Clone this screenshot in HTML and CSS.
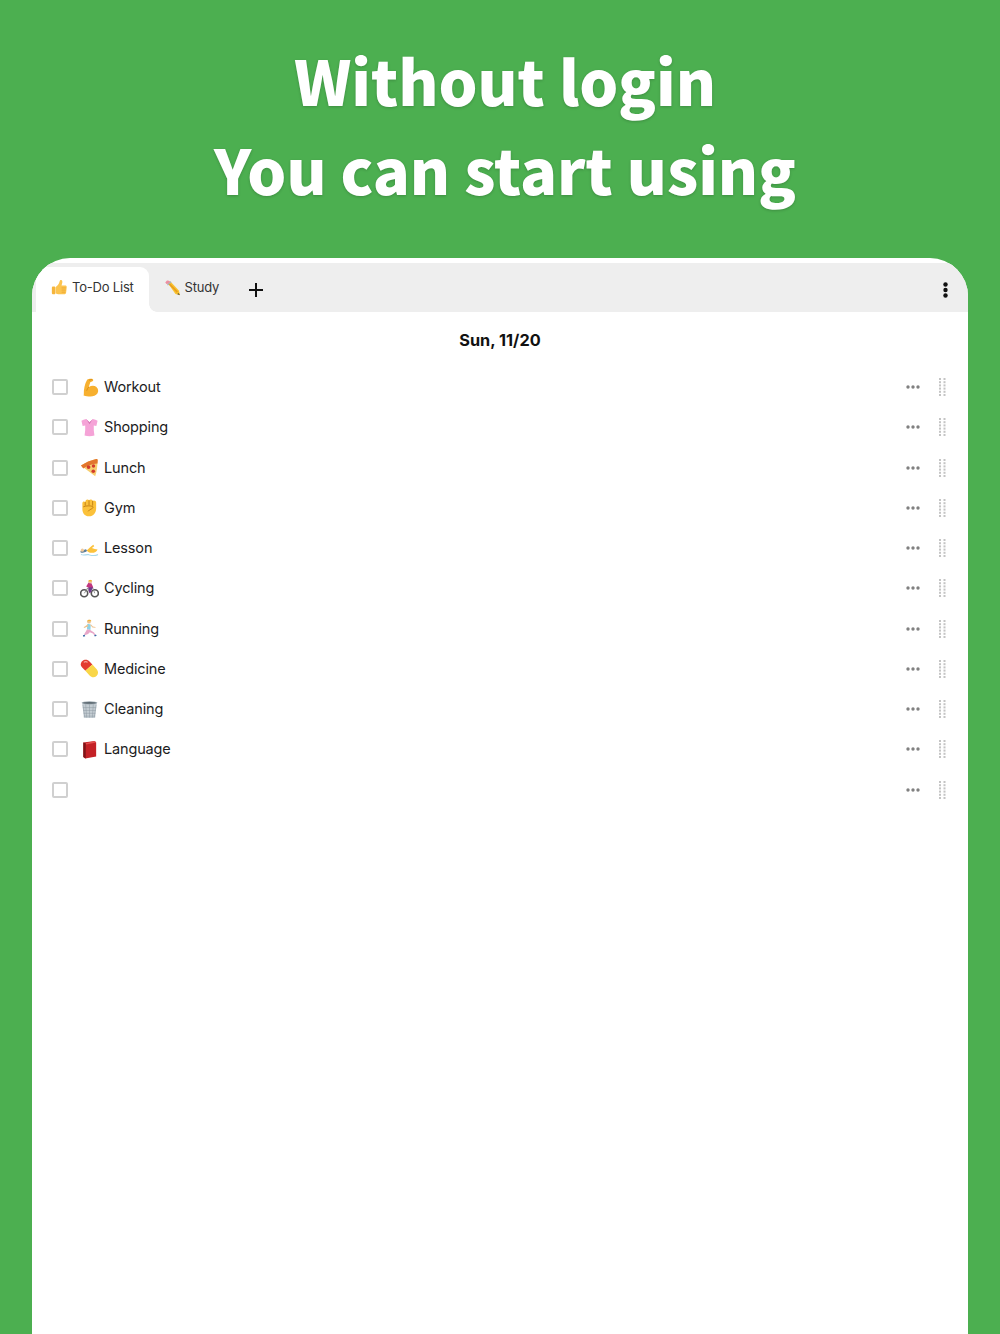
FILE: index.html
```html
<!DOCTYPE html>
<html lang="en">
<head>
    <title>To-Do List</title>
    <link rel="stylesheet" href="styles.css">
</head>
<body>
    <svg class="defs" aria-hidden="true">
        <symbol id="thumb" viewBox="0 0 20 20">
            <path d="M1 10.500c0-1 .7-1.600 1.600-1.600h1.200c.9 0 1.400.7 1.400 1.600v6c0 .9-.6 1.500-1.400 1.500H2.600c-.9 0-1.600-.6-1.600-1.500z" fill="#f5b53c"/>
            <path d="M5.500 9.500c2-1.500 4-3.500 4.600-6.500.2-1.300.8-2 1.800-1.800 1.300.2 1.800 1.700 1.300 3.600l-.8 2.700h4.300c1.200 0 1.900.8 1.800 1.800l-.7 6.500c-.2 1.400-1.100 2.200-2.500 2.200H9.500c-1.700 0-2.700-.5-4-1.200z" fill="#fcc44f"/>
            <path d="M12.500 10.500h5M12.500 13h4.800M12.500 15.500h4.300" stroke="#e59a22" stroke-width=".7" fill="none"/>
        </symbol>
        <symbol id="pencil" viewBox="0 0 20 20">
            <path d="M5 5.500 7.500 3l10 10.500L19 19l-5.500-1.500z" fill="#f8c22f"/>
            <path d="M6.300 4.300l10.200 10.500-1.500 1.500L5 6z" fill="#e99f1d"/>
            <path d="M1.500 4 3.200 2.200c.7-.7 1.600-.7 2.200 0L7.500 3 5 5.500 3 5.800z" fill="#ee8fa0"/>
            <path d="M3.600 6.600 7.800 2.700 8.800 3.700 4.600 7.700z" fill="#a9b0b8"/>
            <path d="M16.700 16.500 19 19l-3.200-1z" fill="#444"/>
        </symbol>
        <symbol id="arm" viewBox="0 0 20 20">
            <path d="M4 17.500C3.800 12 5 6 7.500 1.800 9 .6 12 .4 13.300 1c.9.500.8 2-.1 2.500L10.800 4.600 9.300 9.500c2.400-1.700 5.600-1.800 7.700-.4 2.300 1.600 2.800 4.900 1.300 7.200-1.500 2.200-4.300 3.200-7.300 3.200-2.600 0-5.300-.5-7-1.200-.4-.2-.6-.4 0-.8z" fill="#f7b02f"/>
            <path d="M9.300 9.500c-1.200 1-1.900 2.400-2.200 3.900M12.500 1.500l-3 .8" stroke="#cf8614" stroke-width=".8" fill="none"/>
        </symbol>
        <symbol id="shirt" viewBox="0 0 20 20">
            <path d="M6.500 1 10 4.500 13.500 1c2 .3 3.700 1 5 1.800l-1.300 5.500-2.700-.5c-.2 3.500.1 7 .7 10.700-3.300.8-7.100.8-10.400 0 .6-3.700.9-7.200.7-10.700l-2.700.5L1.500 2.800C2.800 2 4.500 1.300 6.500 1z" fill="#f5a3d7"/>
            <path d="M6.500 1 10 6.500 13.500 1 10 4.500z" fill="#d877b5"/>
        </symbol>
        <symbol id="pizza" viewBox="0 0 20 20">
            <path d="M1 8C6 4.500 11 2.500 17 1c.9-.2 1.600.4 1.600 1.200-.3 5.700-.6 11.800-2.600 17z" fill="#f7ce6e"/>
            <path d="M1 8C6 4.500 11 2.500 17 1c.9-.2 1.600.4 1.600 1.200 0 1.200-.1 2.300-.2 3.500C12 6 7 8.500 3.400 11z" fill="#e2762d"/>
            <circle cx="9" cy="9.500" r="2" fill="#d33b2c"/>
            <circle cx="14.200" cy="8.500" r="1.800" fill="#d33b2c"/>
            <circle cx="14" cy="14" r="1.900" fill="#d33b2c"/>
        </symbol>
        <symbol id="fist" viewBox="0 0 20 20">
            <path d="M2.500 5.500c0-1 .8-1.700 1.700-1.700.5 0 1 .2 1.300.5C5.600 2.800 6.500 1.500 7.800 1.500c.7 0 1.300.3 1.700.9.400-.6 1.100-.9 1.800-.9 1 0 1.800.6 2 1.500.4-.3.900-.5 1.400-.5 1.300 0 2.300.9 2.300 2.200V11c0 4.500-2.900 8.200-7.400 8.200-4.800 0-7.100-3.500-7.100-7.700z" fill="#fbc13a"/>
            <path d="M5.500 4.300V8M9.500 2.500v5M13.300 3v5M3.500 9.300c3-1.300 7-1.300 9.800-.5 1 .8 0 2.500-1.500 2.800-1.500.5-2.500 1.300-3.200 2.500" stroke="#bd7a10" stroke-width=".9" fill="none"/>
        </symbol>
        <symbol id="swim" viewBox="0 0 20 20">
            <path d="M7 12c2-1.500 4-4 7-6l1 1.500-2.500 2c2 .8 4 1.500 6 1.500-1 2.500-3 3.500-6 3.500s-4-1-5.500-2.500z" fill="#fcc23c"/>
            <path d="M.5 12.800 6 10.800c1.500.4 1.600 1.800.5 2.500l-3.500 1.200c-1.500.3-3-.5-2.500-1.700z" fill="#5e7f99"/>
            <circle cx="2.500" cy="11.800" r="1.700" fill="#f0c89a"/>
            <path d="M1 15.800c3 1.400 6-.6 9 .4s6 1 9-.4v1.200c-3 1.300-6 1.200-9 .3s-6 .9-9-.4z" fill="#a9d9ec"/>
        </symbol>
        <symbol id="bike" viewBox="0 0 20 20">
            <g fill="none" stroke="#555" stroke-width="1.700"><circle cx="4.400" cy="15" r="3.700"/><circle cx="15.600" cy="15" r="3.700"/></g>
            <path d="M4.600 15 8 9.500h5.500l2 5.500M8 9.500 10.500 15" stroke="#888" stroke-width=".9" fill="none"/>
            <path d="M6.500 8 9 3.800c1.700-.4 3.200.2 3.500 1.700L14 9l-2.500 1.500L11.500 14 9.500 14.200l-.2-5z" fill="#c2367f"/>
            <path d="M8.800 9 13.500 8.800l-2 5.400-2-.2z" fill="#6d3c8f"/>
            <circle cx="10.800" cy="2.800" r="1.900" fill="#eec39a"/>
            <path d="M8.600 2.500c.5-1.800 3.500-2 4.300-.2z" fill="#f3b32d"/>
        </symbol>
        <symbol id="runner" viewBox="0 0 20 20">
            <circle cx="9.500" cy="2.800" r="2" fill="#efc28e"/>
            <path d="M7.300 2.500C8 .4 11.500.2 12 2.300L9.500 2z" fill="#f2b53a"/>
            <path d="M7.500 5.500c1.500-.5 3-.3 3.800.6l-.3 5.400-3.600-.7z" fill="#8fd3e6"/>
            <path d="M8 5.800 3.800 8.700l.7.9L8.800 7.500zM10.800 6.300l2.300 2.700 3.200.3v-1l-2.700-.3-2.200-2.600z" fill="#efc28e"/>
            <path d="M7.500 10.800 10.800 11.500l4 2.700 1.700 2.800-1.100.6-1.700-2.400-3.400-1.200-1.800 1.800-3.600 1.200-.5-1z" fill="#e8a6c8"/>
            <path d="M3 17.200 5 16.500l.5 1.700-2 .6zM15 17l1.700-.8.900 1.500-2 .7z" fill="#3b6ca8"/>
        </symbol>
        <symbol id="pill" viewBox="0 0 20 20">
            <path d="M2.300 2.300c2.500-2.200 5.800-1.700 7.700.2l3 3.300-7.400 6.600-3.500-3.600C.4 7 .1 4.300 2.300 2.300z" fill="#e33b2f"/>
            <path d="M5.600 12.400 13 5.800l4.600 4.900c2 2.300 1.800 5.300-.2 7.100-2.200 2-5.200 1.700-7.300-.5z" fill="#f9d648"/>
            <path d="M4 3.500c1.300-1 2.800-.9 4 .1" stroke="#f7a49c" stroke-width="1.100" fill="none"/>
        </symbol>
        <symbol id="trash" viewBox="0 0 20 20">
            <path d="M2.300 3h15.400l-1.800 16H4.100z" fill="#c4cdd3"/>
            <path d="M3 5l2 13M6 4.500l1 14M10 4.500v14M14 4.500l-1 14M17 5l-2 13M3 8h14M3.400 11h13.200M3.800 14h12.400M4 17h12" stroke="#8a979f" stroke-width=".5" fill="none"/>
            <ellipse cx="10" cy="3" rx="8.300" ry="1.700" fill="#9aa6ae"/>
            <ellipse cx="10" cy="3.100" rx="6.800" ry=".9" fill="#5e6a72"/>
        </symbol>
        <symbol id="book" viewBox="0 0 20 20">
            <path d="M3.500 2.500 15.500 1l1.500 1.500v14.800L5.500 19.500 3.500 18z" fill="#c42126"/>
            <path d="M3.500 2.500 6 3.500V19.500L3.500 18z" fill="#7c1518"/>
            <path d="M6 3.500 15.500 1l1.500 1.500L6.500 4.700z" fill="#e2504f"/>
        </symbol>
        <symbol id="more" viewBox="0 0 14 4">
            <circle cx="2" cy="2" r="1.700"/><circle cx="7" cy="2" r="1.700"/><circle cx="12" cy="2" r="1.700"/>
        </symbol>
        <symbol id="grip" viewBox="0 0 7 18">
            <rect x="0" y="0" width="2" height="2"/><rect x="4.500" y="0" width="2" height="2"/>
            <rect x="0" y="3.200" width="2" height="2"/><rect x="4.500" y="3.200" width="2" height="2"/>
            <rect x="0" y="6.400" width="2" height="2"/><rect x="4.500" y="6.400" width="2" height="2"/>
            <rect x="0" y="9.600" width="2" height="2"/><rect x="4.500" y="9.600" width="2" height="2"/>
            <rect x="0" y="12.800" width="2" height="2"/><rect x="4.500" y="12.800" width="2" height="2"/>
            <rect x="0" y="16" width="2" height="2"/><rect x="4.500" y="16" width="2" height="2"/>
        </symbol>
    </svg>

    <header class="hero">
        <h1>Without login<br>You can start using</h1>
    </header>

    <main class="card">
        <nav class="tabs">
            <div class="tab active"><svg class="tab-icon"><use href="#thumb"/></svg>To-Do List</div>
            <div class="tab"><svg class="tab-icon"><use href="#pencil"/></svg>Study</div>
            <svg class="add" viewBox="0 0 14 14"><path d="M7 0v14M0 7h14"/></svg>
            <svg class="menu" viewBox="0 0 5 16"><circle cx="2.500" cy="2.500" r="2.200"/><circle cx="2.500" cy="8" r="2.200"/><circle cx="2.500" cy="13.500" r="2.200"/></svg>
        </nav>

        <h2 class="date">Sun, 11/20</h2>

        <ul class="todo-list">
            <li class="todo"><span class="check"></span><svg class="emoji"><use href="#arm"/></svg><span class="label">Workout</span><svg class="more"><use href="#more"/></svg><svg class="grip"><use href="#grip"/></svg></li>
            <li class="todo"><span class="check"></span><svg class="emoji"><use href="#shirt"/></svg><span class="label">Shopping</span><svg class="more"><use href="#more"/></svg><svg class="grip"><use href="#grip"/></svg></li>
            <li class="todo"><span class="check"></span><svg class="emoji"><use href="#pizza"/></svg><span class="label">Lunch</span><svg class="more"><use href="#more"/></svg><svg class="grip"><use href="#grip"/></svg></li>
            <li class="todo"><span class="check"></span><svg class="emoji"><use href="#fist"/></svg><span class="label">Gym</span><svg class="more"><use href="#more"/></svg><svg class="grip"><use href="#grip"/></svg></li>
            <li class="todo"><span class="check"></span><svg class="emoji"><use href="#swim"/></svg><span class="label">Lesson</span><svg class="more"><use href="#more"/></svg><svg class="grip"><use href="#grip"/></svg></li>
            <li class="todo"><span class="check"></span><svg class="emoji"><use href="#bike"/></svg><span class="label">Cycling</span><svg class="more"><use href="#more"/></svg><svg class="grip"><use href="#grip"/></svg></li>
            <li class="todo"><span class="check"></span><svg class="emoji"><use href="#runner"/></svg><span class="label">Running</span><svg class="more"><use href="#more"/></svg><svg class="grip"><use href="#grip"/></svg></li>
            <li class="todo"><span class="check"></span><svg class="emoji"><use href="#pill"/></svg><span class="label">Medicine</span><svg class="more"><use href="#more"/></svg><svg class="grip"><use href="#grip"/></svg></li>
            <li class="todo"><span class="check"></span><svg class="emoji"><use href="#trash"/></svg><span class="label">Cleaning</span><svg class="more"><use href="#more"/></svg><svg class="grip"><use href="#grip"/></svg></li>
            <li class="todo"><span class="check"></span><svg class="emoji"><use href="#book"/></svg><span class="label">Language</span><svg class="more"><use href="#more"/></svg><svg class="grip"><use href="#grip"/></svg></li>
            <li class="todo"><span class="check"></span><span class="label"></span><svg class="more"><use href="#more"/></svg><svg class="grip"><use href="#grip"/></svg></li>
        </ul>
    </main>
</body>
</html>
```

FILE: styles.css
```css
html, body {
    height: 100%;
}
body {
    margin: 0;
    height: 1334px;
    overflow: hidden;
    display: flex;
    flex-direction: column;
    background-color: #4caf50;
    font-family: Inter, Arial, sans-serif;
    color: #1c1c1e;
}
.defs {
    display: none;
}
.hero {
    height: 258px;
    box-sizing: border-box;
    padding-top: 35px;
    text-align: center;
}
.hero h1 {
    margin: 0 0 0 10px;
    font-family: "Noto Sans CJK JP", "Noto Sans", sans-serif;
    font-size: 61.300px;
    font-weight: 900;
    line-height: 89px;
    color: #fff;
    text-shadow: 0 1px 3px rgba(0, 0, 0, 0.2);
}
.card {
    flex: 1;
    margin: 0 32px;
    padding-top: 5px;
    background-color: #fff;
    border-radius: 38px 38px 0 0;
    overflow: hidden;
}
.tabs {
    display: flex;
    align-items: center;
    height: 49px;
    box-sizing: border-box;
    padding: 4px 20px 0 4px;
    background-color: #eee;
}
.tab {
    position: relative;
    display: flex;
    align-items: center;
    align-self: stretch;
    gap: 4px;
    padding: 0 15px 5px;
    font-size: 13px;
    letter-spacing: -0.2px;
    color: #333;
}
.tab.active {
    background-color: #fff;
    border-radius: 9px 9px 0 0;
}
.tab.active::after {
    content: "";
    position: absolute;
    right: -8px;
    bottom: 0;
    width: 8px;
    height: 8px;
    background: radial-gradient(circle at 100% 0, #eee 7.500px, #fff 8px);
}
.tab-icon {
    width: 17px;
    height: 17px;
}
.add {
    width: 14px;
    height: 14px;
    margin-left: 15px;
    stroke: #111;
    stroke-width: 2;
    fill: none;
}
.menu {
    width: 5px;
    height: 16px;
    margin-left: auto;
    fill: #111;
}
.date {
    margin: 0;
    padding-top: 18px;
    height: 37px;
    font-size: 16.300px;
    line-height: 20px;
    font-weight: 700;
    text-align: center;
    color: #111;
}
.todo-list {
    list-style: none;
    margin: 0;
    padding: 0 21px 0 20px;
}
.todo {
    display: flex;
    align-items: center;
    height: 40.250px;
}
.check {
    width: 12px;
    height: 12px;
    border: 2px solid #d0d0d0;
    border-radius: 2px;
    margin-right: 12px;
}
.emoji {
    width: 19px;
    height: 19px;
    margin-right: 5px;
}
.label {
    flex: 1;
    padding-bottom: 1px;
    font-size: 14.500px;
    letter-spacing: -0.15px;
}
.more {
    width: 14px;
    height: 4px;
    margin-right: 19px;
    fill: #808080;
}
.grip {
    width: 7px;
    height: 18px;
    margin-right: 1px;
    fill: #c4c4c4;
}
```
